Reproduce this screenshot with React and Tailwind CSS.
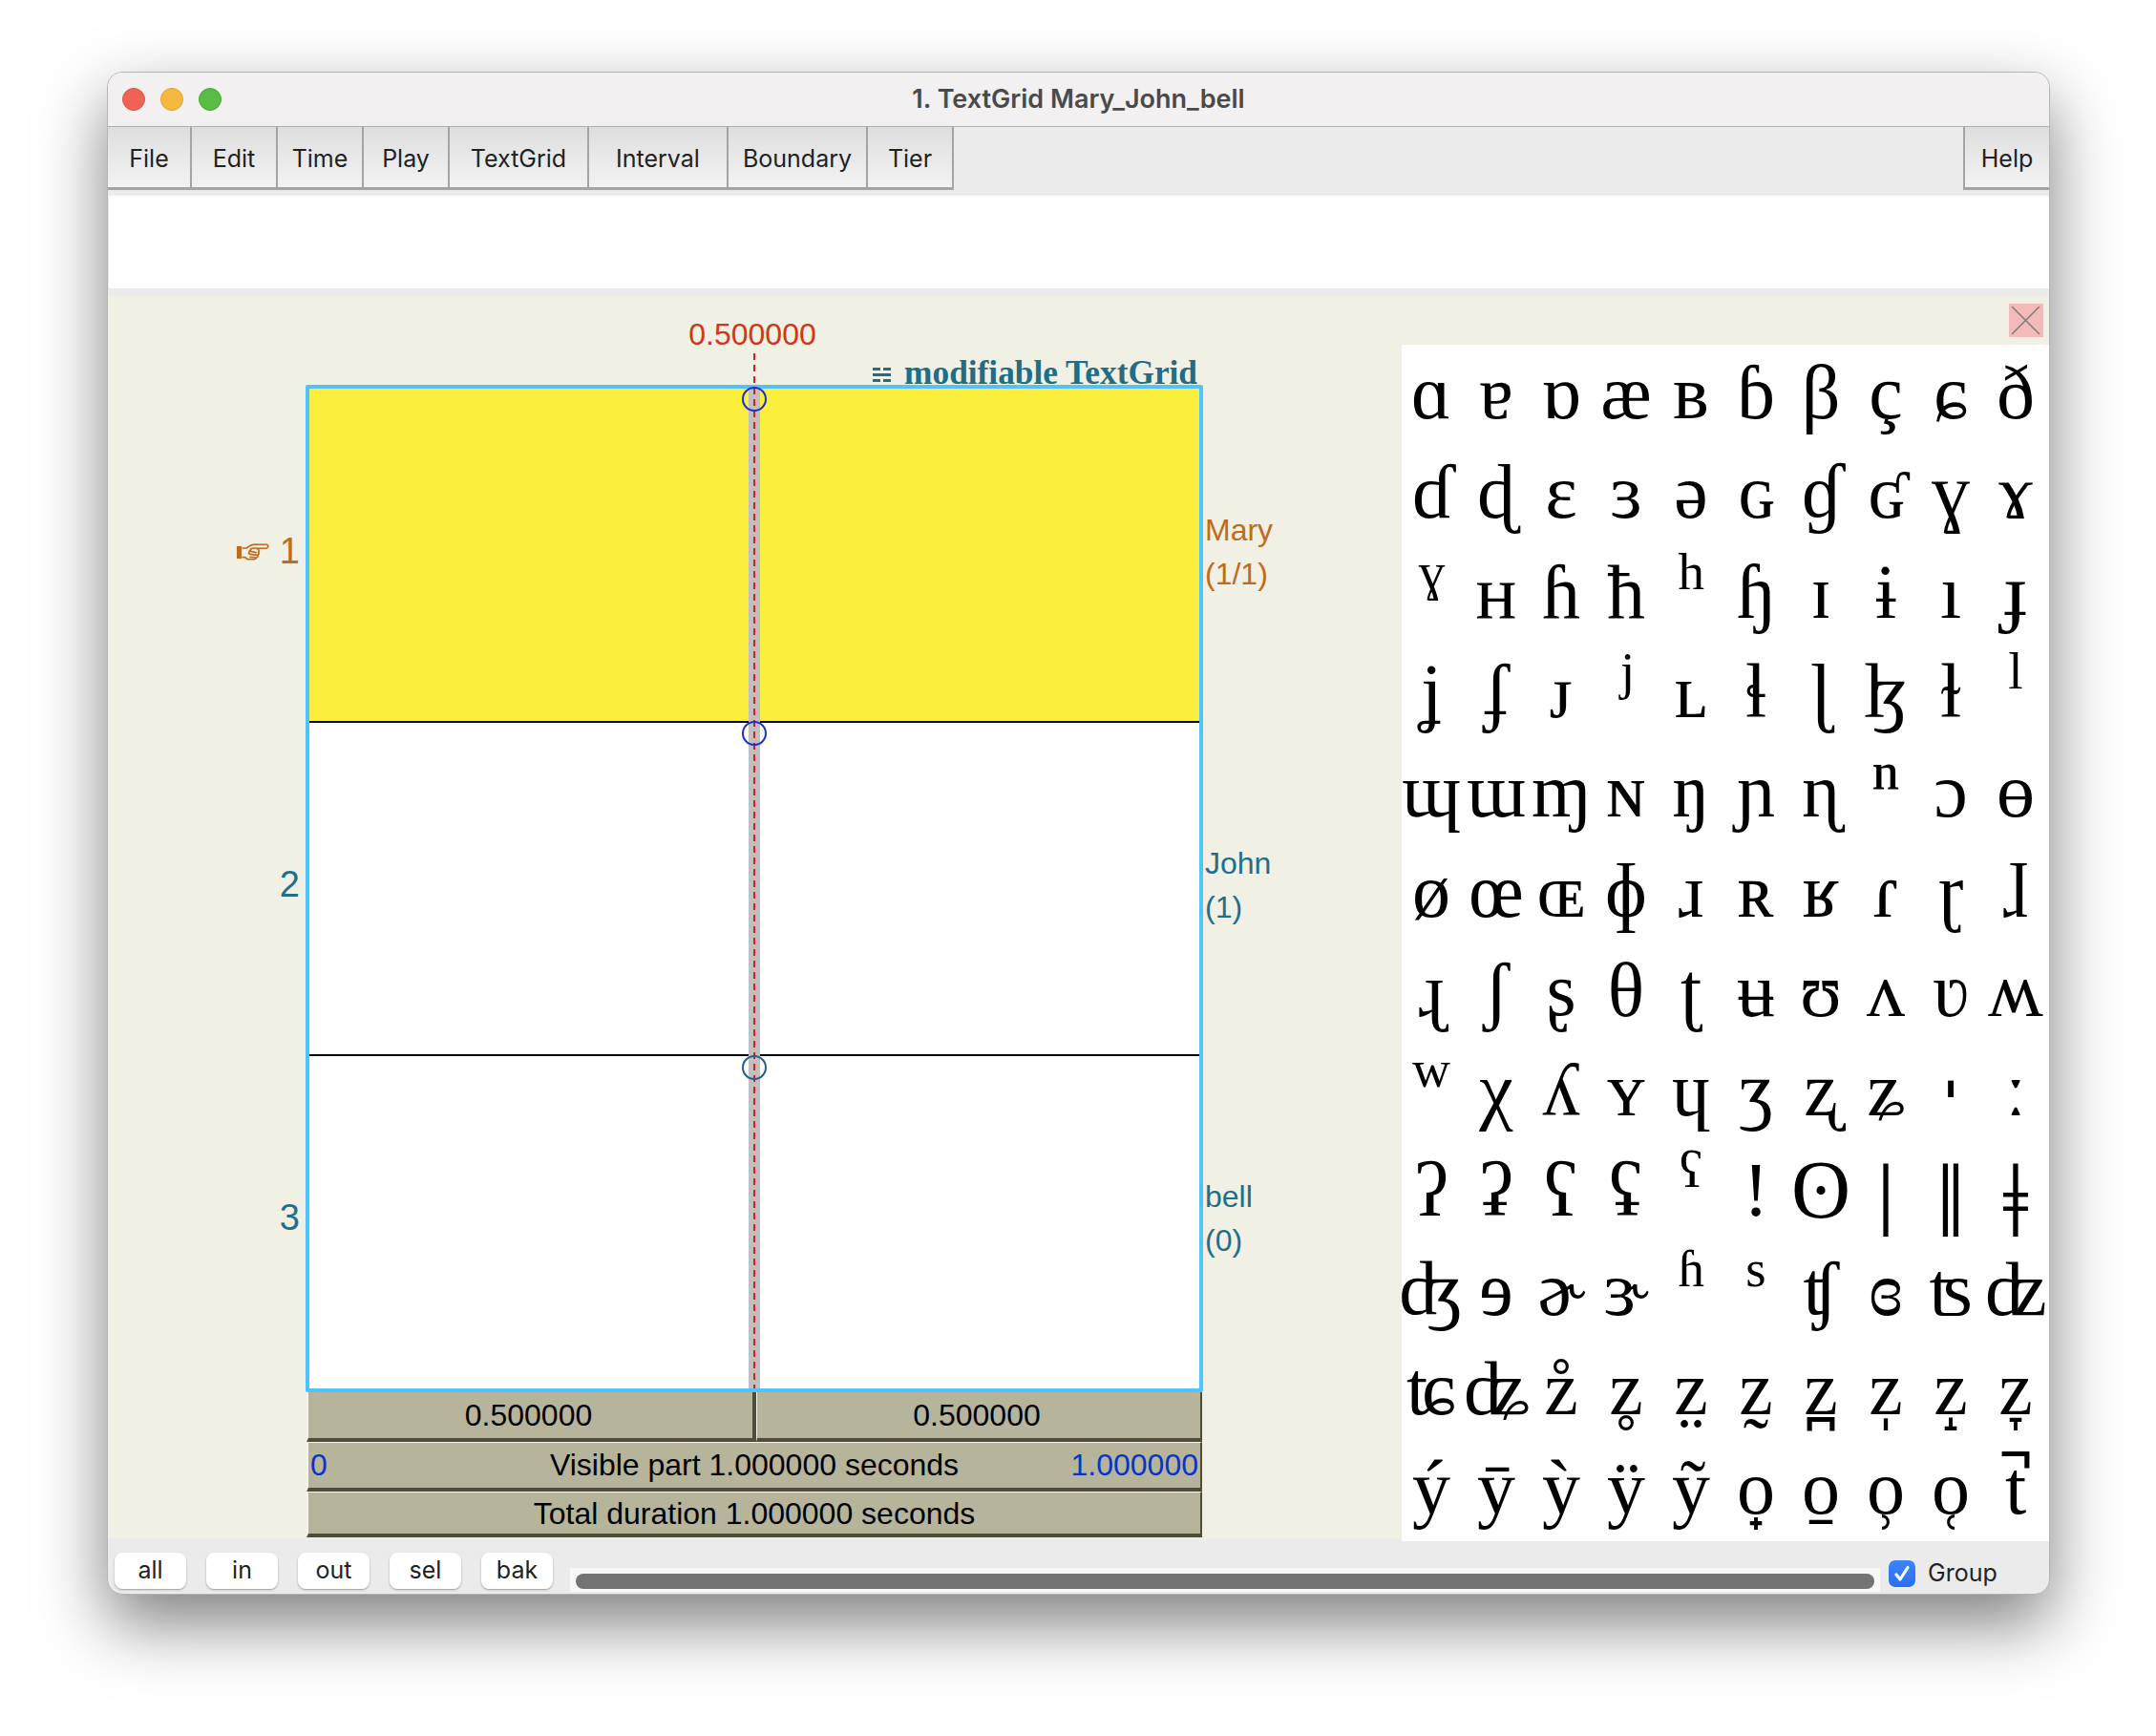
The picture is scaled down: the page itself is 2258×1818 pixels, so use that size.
import React from 'react';

const MENUS = [
  ['File', 'w-[88px]'],
  ['Edit', 'w-[90px]'],
  ['Time', 'w-[90px]'],
  ['Play', 'w-[90px]'],
  ['TextGrid', 'w-[146px]'],
  ['Interval', 'w-[146px]'],
  ['Boundary', 'w-[146px]'],
  ['Tier', 'w-[90px]'],
];

const SUP = 'text-[92px] relative top-[-9px]';
const BAR = 'text-[110px] relative top-[12px]';

const SYMBOLS = [
  ['ɑ', 'ɐ', 'ɒ', 'æ', 'ʙ', 'ɓ', 'β', 'ç', 'ɕ', 'ð'],
  ['ɗ', 'ɖ', 'ɛ', 'ɜ', 'ə', 'ɢ', 'ɠ', 'ʛ', 'ɣ', 'ɤ'],
  [{ c: 'ˠ', cls: SUP }, 'ʜ', 'ɦ', 'ħ', { c: 'ʰ', cls: SUP }, 'ɧ', 'ɪ', 'ɨ', 'ı', 'ɟ'],
  ['ʝ', 'ʄ', 'ᴊ', { c: 'ʲ', cls: SUP }, 'ʟ', 'ɬ', 'ɭ', 'ɮ', 'ɫ', { c: 'ˡ', cls: SUP }],
  ['ɰ', 'ɯ', 'ɱ', 'ɴ', 'ŋ', 'ɲ', 'ɳ', { c: 'ⁿ', cls: SUP }, 'ɔ', 'ɵ'],
  ['ø', 'œ', 'ɶ', 'ɸ', 'ɹ', 'ʀ', 'ʁ', 'ɾ', 'ɽ', 'ɺ'],
  ['ɻ', 'ʃ', 'ʂ', 'θ', 'ʈ', 'ʉ', 'ʊ', 'ʌ', 'ʋ', 'ʍ'],
  [{ c: 'ʷ', cls: SUP }, 'χ', 'ʎ', 'ʏ', 'ɥ', 'ʒ', 'ʐ', 'ʑ', { c: 'ˈ', cls: 'font-bold text-[110px] relative top-[30px]' }, { c: 'ː', cls: 'font-bold' }],
  ['ʔ', 'ʡ', 'ʕ', 'ʢ', { c: 'ˤ', cls: SUP }, '!', { c: 'ʘ', cls: 'text-[86px]' }, { c: 'ǀ', cls: BAR }, { c: 'ǁ', cls: BAR }, { c: 'ǂ', cls: BAR }],
  ['ʤ', 'ɘ', 'ɚ', 'ɝ', { c: 'ʱ', cls: SUP }, { c: 'ˢ', cls: SUP }, 'ʧ', 'ɞ', 'ʦ', 'ʣ'],
  ['ʨ', 'ʥ', { c: 'z', m: '\u030A' }, { c: 'z', m: '\u0325' }, { c: 'z', m: '\u0324' }, { c: 'z', m: '\u0330' }, { c: 'z', m: '\u032A' }, { c: 'z', m: '\u0329' }, { c: 'z', m: '\u031D' }, { c: 'z', m: '\u031E' }],
  ['ý', 'ȳ', 'ỳ', 'ÿ', 'ỹ', { c: 'o', m: '\u031F' }, { c: 'o', m: '\u0320' }, { c: 'o', m: '\u0339' }, { c: 'o', m: '\u031C' }, { c: 't', m: '\u031A' }],
];

const ZOOMS = ['all', 'in', 'out', 'sel', 'bak'];

const TIERS = [
  { no: '1', name: 'Mary', count: '(1/1)', color: 'text-[#c06a1c]', active: true },
  { no: '2', name: 'John', count: '(1)', color: 'text-[#1f6f8b]' },
  { no: '3', name: 'bell', count: '(0)', color: 'text-[#1f6f8b]' },
];

const HandIcon = () => (
  <svg width="34" height="18" viewBox="0 0 34 18" fill="none" stroke="#c06a1c" strokeWidth="1.6" strokeLinejoin="round" strokeLinecap="round">
    <rect x="0" y="3" width="5" height="13" fill="#c06a1c" stroke="none" />
    <path d="M6 5 H10 L15 2 Q18 .8 22 1.2 H31 Q33.4 2 32.6 3.8 Q32 5.4 30 5.2 H21 L23 7 Q24 8.6 22.6 9.4 Q24 11 22 12.4 Q22.6 14.6 20.4 15 Q20 17 17.4 16.8 H13 Q10 16.8 9 14.6 H6" />
    <path d="M21 5.2 Q17 4.6 14.6 6 M13 8 L20 9.6 M13.6 11.4 L21.6 12.4 M14 14.4 L20.2 15 M15 6 L12.4 10.6" />
  </svg>
);

const Symbol = ({ item }) => {
  if (typeof item === 'string') return <span>{item}</span>;
  if (!item.m) return <span className={item.cls}>{item.c}</span>;
  // the marks don't position themselves on the base letter in this font
  return (
    <span className="relative">
      {item.c}
      <span className="absolute top-0 left-1/2 -ml-[20px]">{'\u00A0' + item.m}</span>
    </span>
  );
};

const App = () => {
  return (
    <div className="w-[2258px] h-[1818px] bg-white pl-[112px] pt-[75px] font-['Inter',sans-serif] overflow-hidden">
      <div className="w-[2035px] h-[1595px] flex flex-col border border-[#b4b4b4] rounded-[16px] overflow-hidden bg-[#ebebeb] shadow-[0_30px_70px_rgba(0,0,0,0.5)]">
        {/* title bar */}
        <div className="h-[57px] shrink-0 flex items-center relative bg-[#f2f0f1] border-b border-[#b0b0b0]">
          <div className="flex gap-4 pl-[15px]">
            <span className="w-6 h-6 rounded-full bg-[#ee6355] border border-[#d9534a]" />
            <span className="w-6 h-6 rounded-full bg-[#f5b73d] border border-[#dfa032]" />
            <span className="w-6 h-6 rounded-full bg-[#58bd45] border border-[#4aa93a]" />
          </div>
          <div className="absolute inset-0 flex items-center justify-center text-[27px] font-semibold text-[#4a4a4a]">
            1. TextGrid Mary_John_bell
          </div>
        </div>

        {/* menu bar */}
        <div className="h-[66px] shrink-0 flex justify-between text-[25px] text-[#222]">
          <div className="flex">
            {MENUS.map(([label, width]) => (
              <div key={label} className={`${width} flex items-center justify-center pt-[4px] border-r-2 border-b-[3px] border-[#a4a4a4] bg-gradient-to-b from-[#dedede] to-[#f3f3f3]`}>
                {label}
              </div>
            ))}
          </div>
          <div className="w-[90px] flex items-center justify-center pt-[4px] border-l-2 border-b-[3px] border-[#a4a4a4] bg-gradient-to-b from-[#dedede] to-[#f3f3f3]">
            Help
          </div>
        </div>

        {/* info text */}
        <div className="h-[111px] shrink-0 pt-[6px] pb-[8px] pl-[1px]">
          <div className="h-full bg-white" />
        </div>

        <div className="h-[1304px] shrink-0 flex">
          {/* drawing area */}
          <div className="w-[1355px] shrink-0 h-[1301px] bg-[#f0f0e4] flex">
            <div className="w-[208px] shrink-0 pt-[93px]">
              <div className="h-[1055px] flex flex-col pb-[8px]">
                {TIERS.map((tier) => (
                  <div key={tier.no} className={`flex-1 flex items-center justify-end gap-[11px] pr-[7px] text-[38px] font-['Liberation_Sans',sans-serif] ${tier.color}`}>
                    {tier.active && <HandIcon />}
                    <span>{tier.no}</span>
                  </div>
                ))}
              </div>
            </div>

            <div className="w-[938px] shrink-0 font-['Liberation_Sans',sans-serif]">
              <div className="h-[93px] flex flex-col">
                <div className="h-[64px] pt-[21px] pr-[4px] text-center text-[32px] leading-[38px] text-[#d4341a]">0.500000</div>
                <div className="h-[29px] pt-[4px] flex items-center justify-end gap-[14px] pr-[5px] text-[35.3px] font-bold leading-none text-[#226c85] font-['Liberation_Serif',serif]">
                  <span className="flex flex-col gap-[3px] w-[19px] mt-[4px]">
                    <span className="h-[3px] flex justify-between"><span className="w-[8px] bg-[#226c85]" /><span className="w-[8px] bg-[#226c85]" /></span>
                    <span className="h-[3px] bg-[#226c85]" />
                    <span className="h-[3px] flex justify-between"><span className="w-[8px] bg-[#226c85]" /><span className="w-[8px] bg-[#226c85]" /></span>
                  </span>
                  <span>modifiable TextGrid</span>
                </div>
              </div>

              <div className="relative h-[1055px] -ml-[1px] -mr-[1px] border-4 border-[#4fc3fb] rounded-[2px] flex flex-col bg-white">
                <div className="flex-1 bg-[#fbee3c]" />
                <div className="flex-1 border-t-2 border-black" />
                <div className="flex-1 border-t-2 border-black" />

                {/* cursor overlay */}
                <div className="absolute top-0 bottom-0 left-[460px] w-[12px] bg-[#c0c0c0]" />
                <div className="absolute top-[-37px] bottom-0 left-[465px] w-[2px] bg-[repeating-linear-gradient(to_bottom,#d81f1f_0,#d81f1f_7px,transparent_7px,transparent_12px)]" />
                <div className="absolute top-[-2px] left-[453px] w-[26px] h-[26px] rounded-full border-2 border-[#1a2fd0]" />
                <div className="absolute top-[348px] left-[453px] w-[26px] h-[26px] rounded-full border-2 border-[#1a2fd0]" />
                <div className="absolute top-[698px] left-[453px] w-[26px] h-[26px] rounded-full border-2 border-[#1f5f8f]" />
              </div>

              <div className="flex flex-col text-[32px] leading-none text-black">
                <div className="h-[52px] flex bg-[#b6b59c]">
                  <div className="w-[471px] flex items-center justify-center pr-[4px] border-l-2 border-l-[#f6f6e8] border-r-4 border-r-[#4d4d38] border-b-4 border-b-[#4d4d38]">0.500000</div>
                  <div className="flex-1 flex items-center justify-center pr-[4px] border-l border-l-[#f6f6e8] border-r-2 border-r-[#4d4d38] border-b-4 border-b-[#4d4d38]">0.500000</div>
                </div>
                <div className="h-[52px] flex items-center bg-[#b6b59c] px-[2px] pb-[2px] border-t border-t-[#f6f6e8] border-l-2 border-l-[#f6f6e8] border-r-2 border-r-[#4d4d38] border-b-4 border-b-[#4d4d38]">
                  <span className="flex-1 text-[#0a33cc]">0</span>
                  <span>Visible part 1.000000 seconds</span>
                  <span className="flex-1 text-right text-[#0a33cc]">1.000000</span>
                </div>
                <div className="h-[48px] flex items-center justify-center bg-[#b6b59c] border-t border-t-[#f6f6e8] border-l-2 border-l-[#f6f6e8] border-r-2 border-r-[#4d4d38] border-b-4 border-b-[#4d4d38]">
                  Total duration 1.000000 seconds
                </div>
              </div>
            </div>

            <div className="flex-1 pt-[93px] pl-[3px] font-['Liberation_Sans',sans-serif] text-[32px] leading-[46px]">
              <div className="h-[1055px] flex flex-col pb-[8px]">
                {TIERS.map((tier) => (
                  <div key={tier.no} className={`flex-1 flex flex-col justify-center ${tier.color}`}>
                    <div>{tier.name}</div>
                    <div>{tier.count}</div>
                  </div>
                ))}
              </div>
            </div>
          </div>

          {/* phonetic symbols */}
          <div className="flex-1 flex flex-col bg-[#f0f0e4]">
            <div className="h-[51px] shrink-0 flex justify-end pt-[8px] pr-[6px]">
              <svg width="36" height="35" viewBox="0 0 36 35" className="bg-[#f4b9b9]">
                <path d="M3 3 L32 32 M32 3 L3 32" stroke="#7a7a7a" strokeWidth="1.5" fill="none" />
              </svg>
            </div>
            <div className="flex-1 bg-white font-['Liberation_Serif','DejaVu_Serif',serif] text-[80px] text-black">
              <div className="grid grid-cols-[repeat(10,68px)] auto-rows-[104.3px] -ml-[3px] -mt-[2px] w-[680px]">
                {SYMBOLS.flat().map((item, i) => (
                  <div key={i} className="flex items-center justify-center leading-none whitespace-nowrap">
                    <Symbol item={item} />
                  </div>
                ))}
              </div>
            </div>
          </div>
        </div>

        {/* bottom bar */}
        <div className="flex-1 flex items-start pl-[7px]">
          <div className="flex gap-[21px] pt-[12px]">
            {ZOOMS.map((z) => (
              <div key={z} className="w-[75px] h-[38px] bg-white rounded-[8px] shadow-[0_1px_2px_rgba(0,0,0,0.35)] flex items-center justify-center text-[25px] text-[#222]">
                {z}
              </div>
            ))}
          </div>
          <div className="ml-[18px] mt-[28px] w-[1372px] h-[25px] bg-[#f8f8f8] px-[6px] pt-[6px]">
            <div className="h-[16px] rounded-full bg-[#737373]" />
          </div>
          <div className="ml-[9px] mt-[15px] flex items-center gap-[13px]">
            <span className="w-[28px] h-[28px] rounded-[7px] bg-gradient-to-b from-[#3d85fb] to-[#2a6ef0] flex items-center justify-center">
              <svg width="20" height="20" viewBox="0 0 20 20">
                <path d="M4 11 L8 16 L16 3.5" stroke="#fff" strokeWidth="3.2" strokeLinecap="round" strokeLinejoin="round" fill="none" />
              </svg>
            </span>
            <span className="text-[25px] text-[#222]">Group</span>
          </div>
        </div>
      </div>
    </div>
  );
};

export default App;
